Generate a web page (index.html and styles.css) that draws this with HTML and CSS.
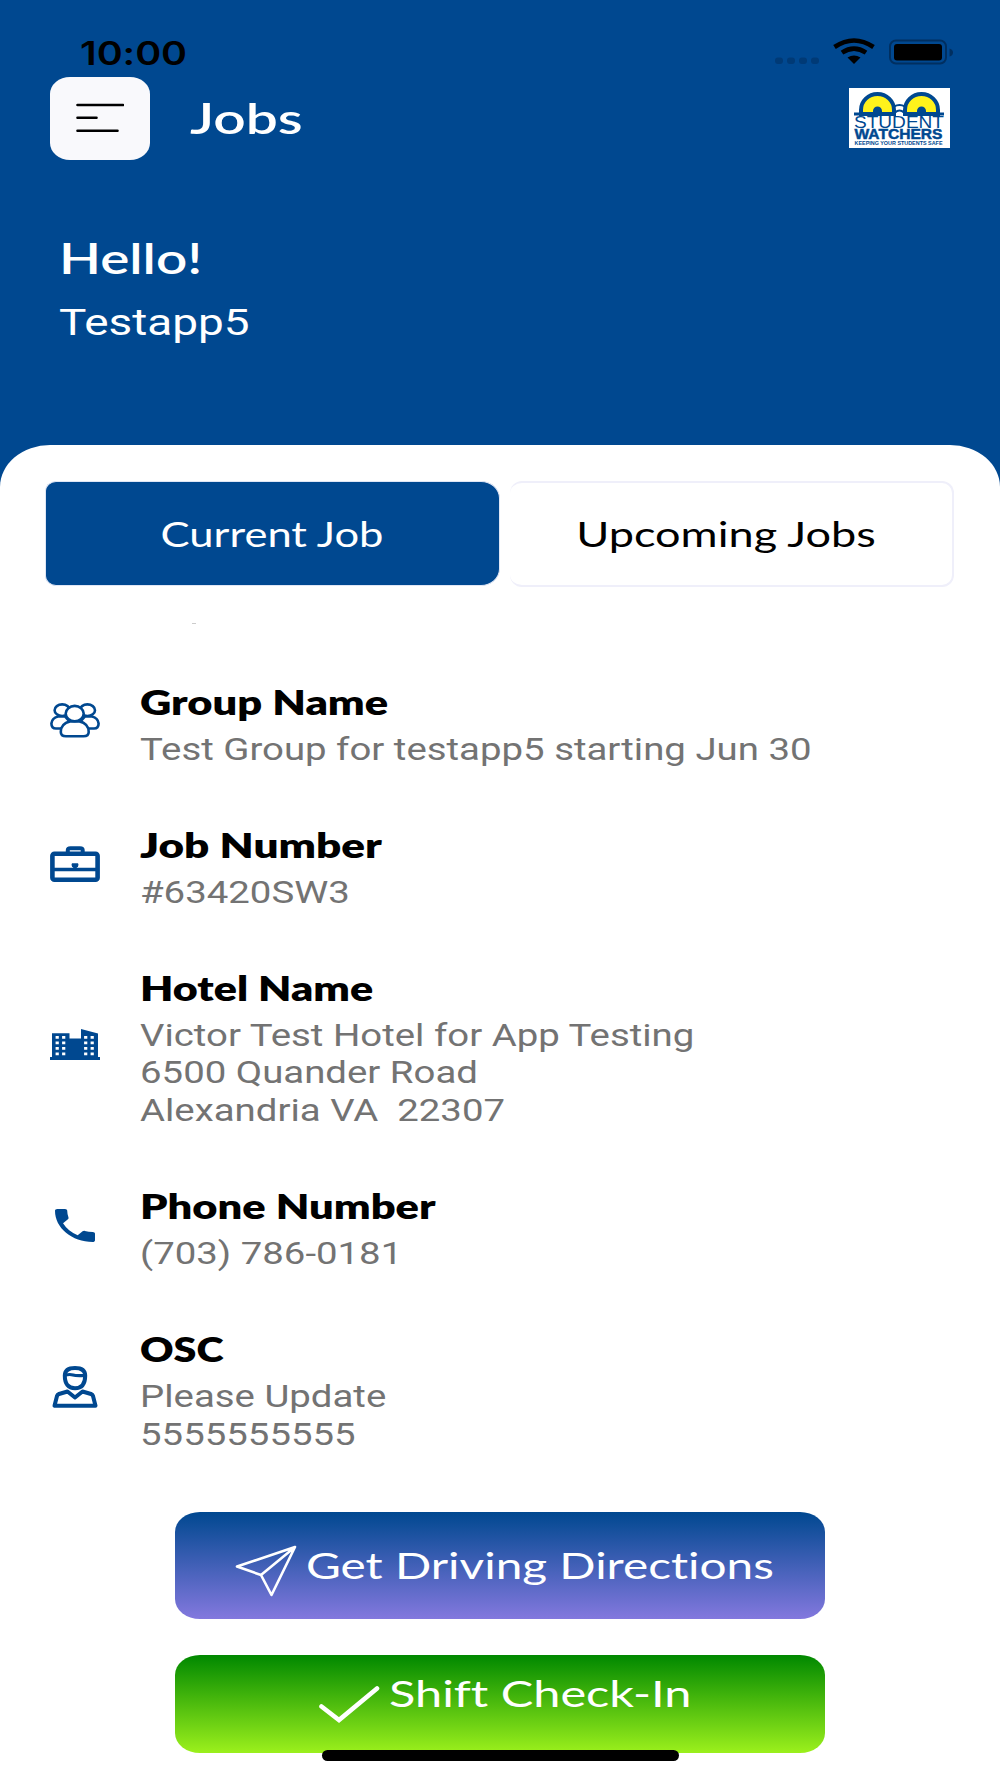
FILE: index.html
```html
<!DOCTYPE html>
<html lang="en">
<head>
    <meta charset="UTF-8">
    <meta name="viewport" content="width=device-width, initial-scale=1.0">
    <title>Jobs</title>
    <link rel="stylesheet" href="styles.css">
</head>
<body>
    <div class="screen">
        <div class="header">
            <div class="status-bar">
                <span class="wide time">10:00</span>
                <svg class="status-icons" width="180" height="30" viewBox="0 0 180 30">
                    <g fill="#003a76">
                        <rect x="0" y="20.500" width="8" height="6.5" rx="3"/>
                        <rect x="12" y="20.500" width="8" height="6.5" rx="3"/>
                        <rect x="24" y="20.500" width="8" height="6.5" rx="3"/>
                        <rect x="36" y="20.500" width="8" height="6.5" rx="3"/>
                    </g>
                    <g fill="none" stroke="#000" stroke-width="4.6">
                        <path d="M59.500 10Q79 -3 98.500 10"/>
                        <path d="M67 15.700Q79 7.700 91 15.700"/>
                    </g>
                    <path d="M72.500 20.500Q79 16.300 85.500 20.500L79 27z"/>
                    <rect x="115" y="3.500" width="56" height="23" rx="6" fill="none" stroke="#002f60" stroke-width="2"/>
                    <rect x="119" y="7" width="48" height="16.500" rx="3"/>
                    <path d="M174.500 11.500q3.500 1 3.500 4t-3.500 4z" fill="#002f60"/>
                </svg>
            </div>
            <div class="nav-bar">
                <div class="menu-button">
                    <svg width="48" height="30" viewBox="0 0 48 30" stroke="#000" stroke-width="2.600" stroke-linecap="round">
                        <path d="M1.500 2H47M1.500 14.700H20.500M1.500 27.700H41.500"/>
                    </svg>
                </div>
                <h1 class="wide jobs">Jobs</h1>
                <svg class="logo" width="101" height="60" viewBox="0 0 101 60">
                    <rect width="101" height="60" fill="#fff"/>
                    <g stroke="#004890" stroke-width="4">
                        <path d="M12 26V22A16.500 16 0 0 1 45 22V26z" fill="#fff21c"/>
                        <path d="M56 26V22A16.500 16 0 0 1 89 22V26z" fill="#fff21c"/>
                        <path d="M45 18.500Q50.500 15.500 56 18.500M46 24.500Q50.500 20.500 55 24.500" stroke-width="2" fill="none"/>
                        <path d="M5 26H45M55 26H95" stroke-width="3"/>
                    </g>
                    <path d="M24 26V23a4.500 4.500 0 0 1 9 0V26zM68 26V23a4.500 4.500 0 0 1 9 0V26z" fill="#004890"/>
                    <text class="logo-top" x="5" y="39.800" textLength="90" lengthAdjust="spacingAndGlyphs">STUDENT</text>
                    <text class="logo-main" x="5.500" y="50.800" textLength="88" lengthAdjust="spacingAndGlyphs">WATCHERS</text>
                    <text class="logo-tag" x="5.500" y="57" textLength="88" lengthAdjust="spacingAndGlyphs">KEEPING YOUR STUDENTS SAFE</text>
                </svg>
            </div>
            <div class="greeting">
                <h2 class="wide hello">Hello!</h2>
                <p class="wide user">Testapp5</p>
            </div>
        </div>

        <div class="sheet">
            <div class="tabs">
                <div class="tab active"><span class="wide current">Current Job</span></div>
                <div class="tab"><span class="wide upcoming">Upcoming Jobs</span></div>
            </div>
            <div class="speck"></div>

            <div class="details">
                <div class="row">
                    <div class="icon">
                        <svg width="50" height="35" viewBox="0 0 50 35" fill="#fff" stroke="#004890" stroke-width="2.600">
                            <ellipse cx="12.200" cy="7.200" rx="7.600" ry="5.800"/>
                            <ellipse cx="37.400" cy="7.200" rx="7.600" ry="5.800"/>
                            <path d="M12 25.500H6Q1.400 25.500 1.400 20.500Q2 15 8 13.500H15L19 18z"/>
                            <path d="M38 25.500H44Q48.600 25.500 48.600 20.500Q48 15 42 13.500H35L31 18z"/>
                            <path d="M20 18.500Q10.800 20.500 10.800 29Q10.800 33.300 16 33.300H33.500Q38.700 33.300 38.700 29Q38.700 20.500 29.500 18.500z"/>
                            <ellipse cx="24.700" cy="10.600" rx="9" ry="7.700"/>
                        </svg>
                    </div>
                    <div class="info">
                        <h3 class="wide group-name">Group Name</h3>
                        <p class="wide">Test Group for testapp5 starting Jun 30</p>
                    </div>
                </div>

                <div class="row">
                    <div class="icon">
                        <svg width="50" height="36" viewBox="0 0 50 36" fill="none" stroke="#004890">
                            <rect x="2.400" y="7.700" width="45.200" height="26" rx="2" stroke-width="4.600"/>
                            <path d="M17.800 7V4Q17.800 2.200 20.500 2.200H30Q32.700 2.200 32.700 4V7" stroke-width="4"/>
                            <path d="M2 23.500H48" stroke-width="3.300"/>
                            <path d="M22 17.300H28Q29 18.500 28 20.500L26.500 22H23.500L22 20.500Q21 18.500 22 17.300z" fill="#004890" stroke="none"/>
                        </svg>
                    </div>
                    <div class="info">
                        <h3 class="wide job-number">Job Number</h3>
                        <p class="wide">#63420SW3</p>
                    </div>
                </div>

                <div class="row">
                    <div class="icon">
                        <svg width="50" height="31" viewBox="0 0 50 31">
                            <path d="M2 4.300H19.500V9.500H31V0L48 4.500V28H50V31H0V28H2z" fill="#004890"/>
                            <path d="M7.200 7V28M13.700 7V28M35.700 7V28M42.200 7V28" stroke="#fff" stroke-width="3.200" stroke-dasharray="2.800 2.700"/>
                        </svg>
                    </div>
                    <div class="info">
                        <h3 class="wide hotel-name">Hotel Name</h3>
                        <p class="wide">Victor Test Hotel for App Testing<br>6500 Quander Road<br>Alexandria VA&nbsp; 22307</p>
                    </div>
                </div>

                <div class="row">
                    <div class="icon">
                        <svg width="40" height="33" viewBox="3 3 18 18" preserveAspectRatio="none" fill="#004890">
                            <path d="M6.620 10.790c1.440 2.830 3.760 5.140 6.590 6.590l2.200-2.200c.27-.27.67-.36 1.020-.24 1.120.37 2.330.57 3.570.57.55 0 1 .45 1 1V20c0 .55-.45 1-1 1-9.390 0-17-7.610-17-17 0-.55.45-1 1-1h3.500c.55 0 1 .45 1 1 0 1.250.2 2.450.57 3.570.11.35.03.74-.25 1.020l-2.200 2.200z"/>
                        </svg>
                    </div>
                    <div class="info">
                        <h3 class="wide phone-number">Phone Number</h3>
                        <p class="wide">(703) 786-0181</p>
                    </div>
                </div>

                <div class="row">
                    <div class="icon">
                        <svg width="46" height="42" viewBox="0 0 46 42" fill="none" stroke="#004890" stroke-width="4" stroke-linejoin="round">
                            <path d="M12.800 9.500Q13 2 23 2T33.200 9.500Q33.200 22.200 23 22.200T12.800 9.500z"/>
                            <path d="M13.500 9Q18 8 21 9T32.500 9.500" stroke-width="3.200"/>
                            <path d="M15.500 25.500L7 28Q5.500 28.500 5 30L2.500 39.800H43.500L41 30Q40.500 28.500 39 28L30.500 25.500L23 31.500z"/>
                        </svg>
                    </div>
                    <div class="info">
                        <h3 class="wide osc">OSC</h3>
                        <p class="wide">Please Update<br>5555555555</p>
                    </div>
                </div>
            </div>

            <div class="button directions">
                <svg width="62" height="52" viewBox="0 0 62 52" fill="none" stroke="#fff" stroke-width="2.600" stroke-linejoin="round">
                    <path d="M60 2L2 21.500L26 30L36.500 50zM60 2L26 30"/>
                </svg>
                <span class="wide get-directions">Get Driving Directions</span>
            </div>
            <div class="button check-in">
                <svg width="62" height="37" viewBox="0 0 62 37" fill="none" stroke="#fff" stroke-width="4.600" stroke-linecap="round">
                    <path d="M3.500 20.500L21 34L59 2.500"/>
                </svg>
                <span class="wide shift">Shift Check-In</span>
            </div>
        </div>
        <div class="home-indicator"></div>
    </div>
</body>
</html>
```
FILE: styles.css
```css
body {
    margin: 0;
    background-color: #fff;
    font-family: Lato, "Open Sans", sans-serif;
    font-variant-ligatures: none;
    color: #000;
}
h1, h2, h3, p {
    margin: 0;
}
svg {
    display: block;
    flex-shrink: 0;
}
.screen {
    width: 1000px;
    height: 1778px;
    overflow: hidden;
    background-color: #004890;
    display: flex;
    flex-direction: column;
}
.header {
    height: 444.5px;
    flex-shrink: 0;
    color: #fff;
}
/* labels are drawn wider than the font's own proportions */
.wide {
    display: block;
    width: max-content;
    white-space: nowrap;
    transform: scaleX(1.218);
    transform-origin: left center;
}

/* status bar and navigation */
.status-bar {
    display: flex;
    justify-content: space-between;
    height: 40px;
    padding: 37px 45px 0 80px;
}
.time {
    font-family: Inter, sans-serif;
    font-size: 32px;
    line-height: 33px;
    font-weight: 600;
    color: #000;
    transform: scaleX(1.23);
}
.nav-bar {
    display: flex;
    align-items: flex-start;
    padding: 0 50px;
}
.menu-button {
    width: 100px;
    height: 82.5px;
    border-radius: 20px / 17px;
    background-color: #f9f9fc;
    display: flex;
    align-items: center;
    justify-content: center;
}
.jobs {
    font-size: 42px;
    line-height: 50px;
    font-weight: 600;
    margin: 16px 0 0 39.5px;
    transform: scaleX(1.355);
}
.logo {
    margin: 11px 0 0 auto;
}
.logo text {
    fill: #004890;
    font-family: "Liberation Sans", Arial, sans-serif;
}
.logo-top {
    font-size: 16px;
}
.logo-main {
    font-size: 15.5px;
    font-weight: bold;
    stroke: #004890;
    stroke-width: 0.5px;
}
.logo-tag {
    font-size: 5.5px;
    font-weight: bold;
}
.greeting {
    padding: 73px 0 0 59px;
}
.hello {
    font-size: 42px;
    line-height: 50px;
    font-weight: 600;
    transform: scaleX(1.305);
}
.user {
    font-family: Roboto, sans-serif;
    font-size: 37px;
    line-height: 44px;
    margin-top: 18px;
    transform: scaleX(1.24);
}

/* white sheet */
.sheet {
    flex: 1;
    background-color: #fff;
    border-radius: 50px 50px 0 0 / 42px 42px 0 0;
    display: flex;
    flex-direction: column;
    align-items: center;
}
.tabs {
    display: flex;
    align-self: stretch;
    gap: 10px;
    padding: 36px 45px 0;
}
.tab {
    width: 439px;
    height: 102px;
    padding-right: 3px;
    border: 2px solid #efeffa;
    border-left: 0;
    border-radius: 12px;
    display: flex;
    align-items: center;
    justify-content: center;
    font-size: 34px;
    flex-shrink: 0;
}
.tab .wide {
    transform-origin: center;
}
.tab.active {
    width: 453px;
    height: 103px;
    padding-right: 0;
    border: 1px solid #dfe6f5;
    border-radius: 11px 19px 19px 11px / 10px 17px 17px 10px;
    margin-left: -0.5px;
    background-color: #004890;
    color: #fff;
}
.tab .current {
    transform: scaleX(1.28);
}
.tab .upcoming {
    margin-right: 5px;
    transform: scaleX(1.325);
}
.speck {
    align-self: flex-start;
    width: 4px;
    height: 1px;
    margin: 36px 0 0 192px;
    background-color: #ccc;
}
.details {
    align-self: stretch;
    display: flex;
    flex-direction: column;
    gap: 52px;
    margin-top: 53px;
}
.row {
    display: flex;
    align-items: center;
}
.icon {
    width: 50px;
    margin: 0 39.5px 3px 50px;
    display: flex;
    justify-content: center;
}
.info h3 {
    font-size: 33px;
    line-height: 50px;
    font-weight: 800;
    transform: scaleX(1.315);
}
.info .job-number {
    transform: scaleX(1.335);
}
.info .hotel-name {
    transform: scaleX(1.305);
}
.info .osc {
    transform: scaleX(1.25);
}
.info p {
    font-family: Roboto, sans-serif;
    font-size: 31.5px;
    line-height: 37.3px;
    margin-top: 4px;
    color: #737373;
}

/* buttons */
.button {
    width: 650px;
    border-radius: 25px / 20px;
    display: flex;
    color: #fff;
    font-size: 37px;
    line-height: 44px;
    flex-shrink: 0;
    box-sizing: border-box;
}
.directions {
    height: 107px;
    margin-top: 59px;
    padding: 33px 0 0 60px;
    background: linear-gradient(#004890, #8378de);
}
.check-in {
    height: 98px;
    margin-top: 36px;
    padding: 31px 0 0 143px;
    background: linear-gradient(#008800, #9cf01c);
}
.button .wide {
    margin-left: 9px;
}
.get-directions {
    margin-top: -2px;
    transform: scaleX(1.29);
}
.shift {
    margin-top: -15px;
    transform: scaleX(1.315);
}
.home-indicator {
    position: absolute;
    left: 322px;
    top: 1750px;
    width: 357px;
    height: 11px;
    border-radius: 6px;
    background-color: #000;
}
```
